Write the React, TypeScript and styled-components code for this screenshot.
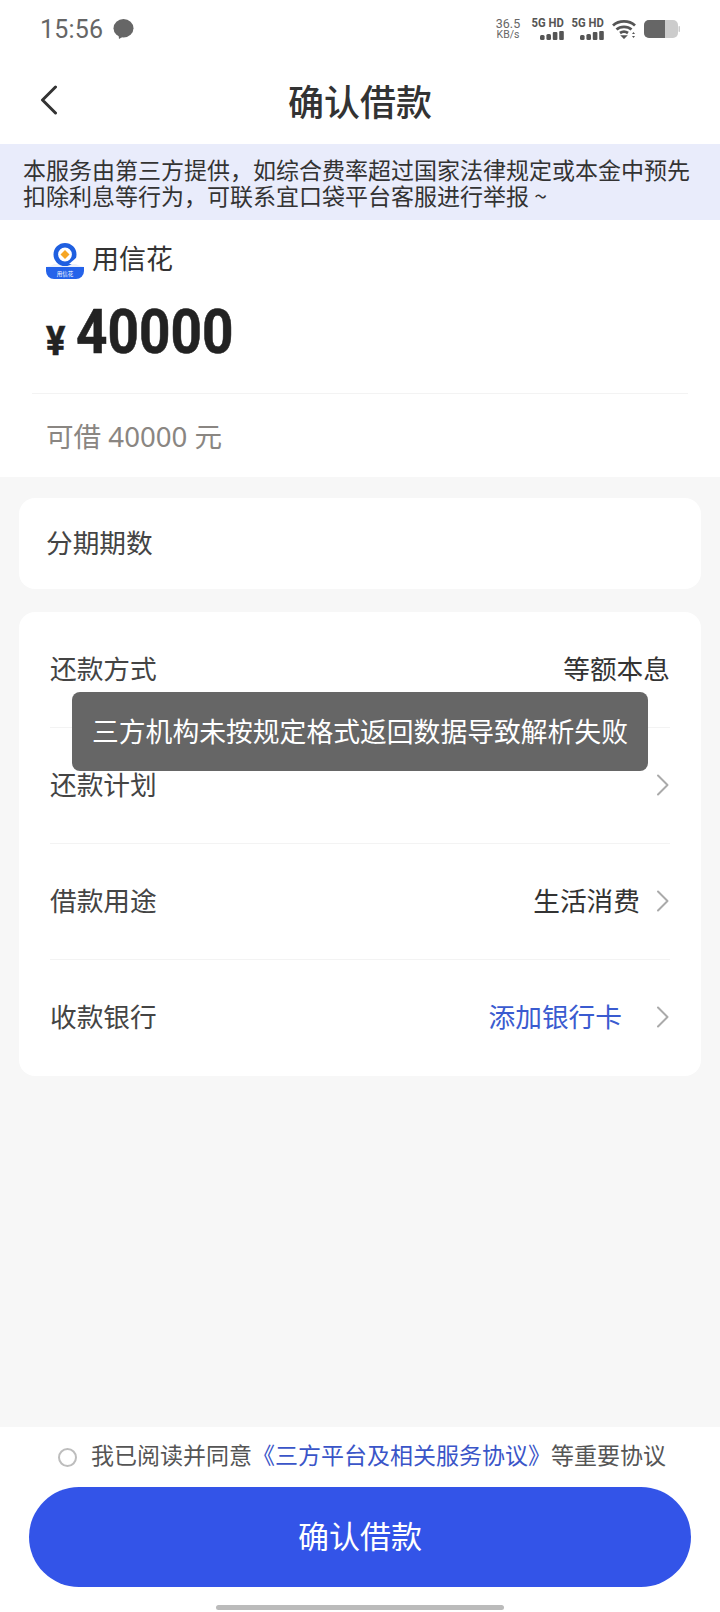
import React from "react";
import styled, { createGlobalStyle } from "styled-components";

const Global = createGlobalStyle`
  html, body { margin: 0; padding: 0; background: #f7f7f7; }
  * { box-sizing: border-box; }
  body { font-family: "Noto Sans CJK SC", "Noto Sans", sans-serif; color: #333; }
`;

const Page = styled.div`
  position: relative;
  width: 720px;
  height: 1612px;
  display: flex;
  flex-direction: column;
  background: #f7f7f7;
  overflow: hidden;
`;

const TopArea = styled.div`
  background: #fff;
`;

const StatusBar = styled.div`
  height: 58px;
  padding: 0 40px;
  display: flex;
  align-items: center;
  justify-content: space-between;
`;

const StatusLeft = styled.div`
  display: flex;
  align-items: center;
  gap: 10px;
`;

const Clock = styled.span`
  font-family: Roboto, sans-serif;
  font-size: 25px;
  letter-spacing: 0.2px;
  color: #666;
  line-height: 1;
`;

const StatusRight = styled.div`
  display: flex;
  align-items: center;
  gap: 8px;
  margin-top: -1px;
`;

const NetSpeed = styled.div`
  width: 28px;
  margin-right: 2px;
  display: flex;
  flex-direction: column;
  align-items: center;
  font-family: Roboto, sans-serif;
  color: #666;
  line-height: 11px;
`;

const SpeedValue = styled.span`
  font-size: 12.5px;
`;

const SpeedUnit = styled.span`
  font-size: 10.5px;
`;

const SignalGroup = styled.div`
  width: 32px;
  display: flex;
  flex-direction: column;
  align-items: flex-end;
  gap: 3px;
`;

const SignalLabel = styled.span`
  font-family: Roboto, sans-serif;
  font-weight: 700;
  font-size: 12.5px;
  line-height: 11px;
  color: #555;
  white-space: nowrap;
  transform: scaleX(0.9);
  transform-origin: right center;
`;

const NavBar = styled.div`
  position: relative;
  height: 86px;
  display: flex;
  align-items: center;
  justify-content: center;
`;

const BackIcon = styled.svg`
  position: absolute;
  left: 40px;
  top: 27px;
`;

const Title = styled.h1`
  margin: 0 0 2px;
  font-size: 36px;
  font-weight: 500;
  color: #333;
  line-height: 1;
`;

const Notice = styled.div`
  height: 76px;
  padding: 12px 23px;
  background: #e9ecfb;
  font-size: 23px;
  line-height: 26px;
  color: #333;
`;

const Merchant = styled.section`
  height: 257px;
  background: #fff;
  padding-top: 23px;
  display: flex;
  flex-direction: column;
`;

const BrandRow = styled.div`
  height: 36px;
  padding-left: 46px;
  display: flex;
  align-items: center;
  gap: 8px;
`;

const BrandName = styled.span`
  font-size: 27px;
  color: #333;
  line-height: 1;
  margin-top: -7px;
`;

const AmountRow = styled.div`
  height: 114px;
  padding: 23px 0 0 46px;
  display: flex;
  align-items: flex-start;
  font-family: Roboto, sans-serif;
  font-weight: 700;
  color: #222;
`;

const Currency = styled.span`
  font-size: 40px;
  line-height: 1;
  margin-top: 20px;
  width: 30px;
  -webkit-text-stroke: 0.6px #222;
  transform: scaleX(0.9);
  transform-origin: left center;
`;

const Amount = styled.span`
  font-size: 62px;
  line-height: 1;
  margin-top: -1px;
  -webkit-text-stroke: 0.6px #222;
  transform: scaleX(0.885);
  transform-origin: left center;
`;

const Rule = styled.div`
  height: 1px;
  margin: 0 32px;
  background: #f3f3f3;
`;

const Available = styled.div`
  flex: 1;
  padding: 0 0 2px 46px;
  display: flex;
  align-items: center;
  font-family: "Noto Sans", "Noto Sans CJK SC", sans-serif;
  font-size: 27.6px;
  color: #8a8682;
`;

const Card = styled.section`
  margin: 0 19px;
  background: #fff;
  border-radius: 16px;
`;

const TermCard = styled(Card)`
  margin-top: 21px;
  height: 91px;
  padding: 0 27px 5px;
  display: flex;
  align-items: center;
  font-size: 26.7px;
  color: #444;
`;

const DetailCard = styled(Card)`
  margin-top: 23px;
  padding: 0 31px;
`;

const Row = styled.div<{ $last?: boolean }>`
  height: 116px;
  padding-bottom: 2px;
  display: flex;
  align-items: center;
  justify-content: space-between;
  font-size: 26.7px;
  border-bottom: ${(p) => (p.$last ? "none" : "1px solid #f3f3f3")};
`;

const RowLabel = styled.span`
  color: #444;
  margin-bottom: 3px;
`;

const RowEnd = styled.div`
  display: flex;
  align-items: center;
`;

const RowValue = styled.span<{ $gap?: number; $link?: boolean }>`
  color: ${(p) => (p.$link ? "#3a5bd0" : "#333")};
  margin-right: ${(p) => p.$gap ?? 0}px;
  margin-bottom: 3px;
`;

const Footer = styled.footer`
  margin-top: auto;
  height: 185px;
  background: #fff;
  display: flex;
  flex-direction: column;
  align-items: center;
`;

const Agreement = styled.div`
  height: 60px;
  width: 100%;
  padding: 0 0 6px 58px;
  display: flex;
  align-items: center;
  font-size: 23px;
  color: #555;
  white-space: nowrap;
`;

const Radio = styled.span`
  width: 19px;
  height: 19px;
  margin: 6px 14px 0 0;
  border: 2px solid #bdbdbd;
  border-radius: 50%;
  flex: none;
`;

const Link = styled.span`
  color: #3a55c8;
`;

const ConfirmButton = styled.button`
  width: 662px;
  height: 100px;
  border: none;
  border-radius: 50px;
  background: #3354e8;
  color: #fff;
  font-family: inherit;
  font-size: 31px;
  padding: 0 0 6px;
`;

const HomeBar = styled.div`
  width: 288px;
  height: 5px;
  margin-top: 18px;
  border-radius: 3px;
  background: #bbb;
`;

const Toast = styled.div`
  position: absolute;
  left: 72px;
  top: 692px;
  width: 576px;
  height: 79px;
  padding-bottom: 2px;
  border-radius: 8px;
  background: #666;
  color: #fff;
  font-size: 26.8px;
  display: flex;
  align-items: center;
  justify-content: center;
  white-space: nowrap;
`;

const Chevron = () => (
  <svg width="14" height="22" viewBox="0 0 14 22" fill="none">
    <path d="M2 1.5 L11.5 11 L2 20.5" stroke="#aaa" strokeWidth="2" strokeLinecap="round" strokeLinejoin="round" />
  </svg>
);

const Bars = () => (
  <svg width="24" height="9" viewBox="0 0 24 9" fill="#555">
    <rect x="0" y="4" width="4.6" height="5" rx="1.5" />
    <rect x="6.4" y="3" width="4.6" height="6" rx="1.5" />
    <rect x="12.8" y="1" width="4.6" height="8" rx="1" />
    <rect x="19.2" y="0" width="4.6" height="9" rx="1" />
  </svg>
);

// Speech bubble shown in the notification area
const ChatIcon = () => (
  <svg width="21" height="20" viewBox="0 0 21 20" fill="#666">
    <ellipse cx="10.5" cy="9.2" rx="10" ry="9.2" />
    <path d="M5.5 15 L6 20 L11 17 Z" />
  </svg>
);

const WifiIcon = () => (
  <svg width="24" height="20" viewBox="0 0 24 20" fill="none" stroke="#555" strokeWidth="2.8">
    <path d="M1 6.5 C7 1 17 1 23 6.5" />
    <path d="M4.5 10.5 C8.5 7 15.5 7 19.5 10.5" />
    <path d="M8 14 C10.5 12.3 13.5 12.3 16 14" />
    <path d="M10 17 L12 19 L14 17 Z" fill="#555" strokeWidth="1.5" />
    <path d="M20 15 L23 15 L21.5 13 Z M20 17 L23 17 L21.5 19 Z" fill="#555" stroke="none" />
  </svg>
);

const BatteryIcon = () => (
  <svg width="36" height="18" viewBox="0 0 36 18">
    <rect x="0" y="0" width="34" height="18" rx="5" fill="#ccc" />
    <path d="M5 0 H21 V18 H5 A5 5 0 0 1 0 13 V5 A5 5 0 0 1 5 0 Z" fill="#666" />
    <rect x="34.5" y="6" width="1.5" height="6" rx="0.7" fill="#ccc" />
  </svg>
);

const BrandLogo = () => (
  <svg width="38" height="36" viewBox="0 0 38 36" fill="none">
    <path d="M0 24 H38 V28 A8 8 0 0 1 30 36 H8 A8 8 0 0 1 0 28 Z" fill="#2563ea" />
    <path d="M0 24 C3 23 6 22.5 8 21 L30 21 C32 22.5 35 23 38 24 Z" fill="#eef2fb" />
    <circle cx="19" cy="11.5" r="9.2" stroke="#1f5fe0" strokeWidth="4.6" />
    <path d="M23 21 L30 21 L30 15 Z" fill="#fff" />
    <path d="M19 7 L23.5 11.5 L19 16 L14.5 11.5 Z" fill="#f6a623" />
    <text x="19" y="32.5" textAnchor="middle" fontSize="5.5" fill="#fff" fontFamily="Noto Sans CJK SC">用信花</text>
  </svg>
);

export default function App() {
  return (
    <Page>
      <Global />
      <TopArea>
        <StatusBar>
          <StatusLeft>
            <Clock>15:56</Clock>
            <ChatIcon />
          </StatusLeft>
          <StatusRight>
            <NetSpeed>
              <SpeedValue>36.5</SpeedValue>
              <SpeedUnit>KB/s</SpeedUnit>
            </NetSpeed>
            <SignalGroup>
              <SignalLabel>5G HD</SignalLabel>
              <Bars />
            </SignalGroup>
            <SignalGroup>
              <SignalLabel>5G HD</SignalLabel>
              <Bars />
            </SignalGroup>
            <WifiIcon />
            <BatteryIcon />
          </StatusRight>
        </StatusBar>
        <NavBar>
          <BackIcon width="18" height="30" viewBox="0 0 18 30" fill="none">
            <path d="M15.5 2 L2.5 15 L15.5 28" stroke="#333" strokeWidth="3" strokeLinecap="round" strokeLinejoin="round" />
          </BackIcon>
          <Title>确认借款</Title>
        </NavBar>
      </TopArea>

      <Notice>
        本服务由第三方提供，如综合费率超过国家法律规定或本金中预先
        <br />
        扣除利息等行为，可联系宜口袋平台客服进行举报 ~
      </Notice>

      <Merchant>
        <BrandRow>
          <BrandLogo />
          <BrandName>用信花</BrandName>
        </BrandRow>
        <AmountRow>
          <Currency>¥</Currency>
          <Amount>40000</Amount>
        </AmountRow>
        <Rule />
        <Available>可借 40000 元</Available>
      </Merchant>

      <TermCard>分期期数</TermCard>

      <DetailCard>
        <Row>
          <RowLabel>还款方式</RowLabel>
          <RowEnd>
            <RowValue>等额本息</RowValue>
          </RowEnd>
        </Row>
        <Row>
          <RowLabel>还款计划</RowLabel>
          <RowEnd>
            <Chevron />
          </RowEnd>
        </Row>
        <Row>
          <RowLabel>借款用途</RowLabel>
          <RowEnd>
            <RowValue $gap={16}>生活消费</RowValue>
            <Chevron />
          </RowEnd>
        </Row>
        <Row $last>
          <RowLabel>收款银行</RowLabel>
          <RowEnd>
            <RowValue $link $gap={34}>添加银行卡</RowValue>
            <Chevron />
          </RowEnd>
        </Row>
      </DetailCard>

      <Footer>
        <Agreement>
          <Radio />
          我已阅读并同意<Link>《三方平台及相关服务协议》</Link>等重要协议
        </Agreement>
        <ConfirmButton>确认借款</ConfirmButton>
        <HomeBar />
      </Footer>

      <Toast>三方机构未按规定格式返回数据导致解析失败</Toast>
    </Page>
  );
}
